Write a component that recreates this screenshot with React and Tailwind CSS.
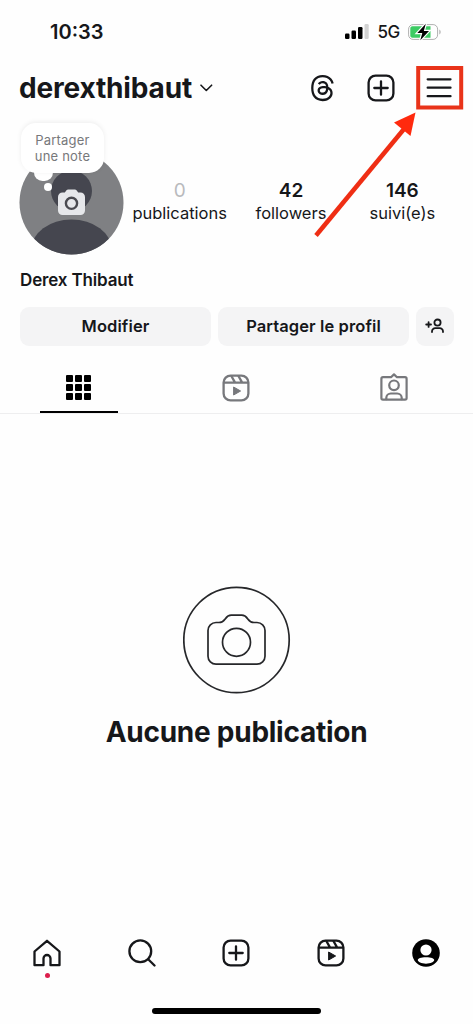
import React from "react";
import { FaThreads } from "react-icons/fa6";

const stats = [
    { value: "0", label: "publications", muted: true },
    { value: "42", label: "followers" },
    { value: "146", label: "suivi(e)s" },
];

function PlusIcon() {
    return (
        <svg width="28" height="28" viewBox="0 0 28 28" fill="none" stroke="currentColor" strokeWidth="2.3" strokeLinecap="round">
            <rect x="1.6" y="1.6" width="24.8" height="24.8" rx="7" />
            <path d="M14 7.3v13.4M7.3 14h13.4" />
        </svg>
    );
}

function ReelsIcon() {
    return (
        <svg width="28" height="28" viewBox="0 0 28 28" fill="none" stroke="currentColor" strokeWidth="2.3" strokeLinejoin="round">
            <rect x="1.6" y="1.6" width="24.8" height="24.8" rx="7" />
            <path d="M1.8 8.7h24.4M9.2 1.8l3.9 6.8M16.3 1.8l3.9 6.8" />
            <path d="M11.6 13v8l7-4z" fill="currentColor" strokeWidth="1" />
        </svg>
    );
}

function TaggedIcon() {
    return (
        <svg width="28" height="30" viewBox="0 0 28 30" fill="none" stroke="currentColor" strokeWidth="2.2" strokeLinejoin="round" strokeLinecap="round">
            <path d="M3 5.2h8L14 2.400l3 2.800h8a1.600 1.600 0 0 1 1.600 1.600V26a1.600 1.600 0 0 1-1.600 1.600H3A1.600 1.600 0 0 1 1.400 26V6.800A1.600 1.600 0 0 1 3 5.200z" />
            <circle cx="14" cy="13.300" r="4.800" />
            <path d="M6.300 27.200v-1.400a4.500 4.500 0 0 1 4.500-4.300h6.400a4.500 4.500 0 0 1 4.500 4.300v1.400" />
        </svg>
    );
}

function GridIcon() {
    return (
        <div className="grid grid-cols-3 gap-[2px] text-black">
            {Array.from({ length: 9 }).map((_, i) => (
                <span key={i} className="h-[7px] w-[7px] rounded-[1px] bg-black" />
            ))}
        </div>
    );
}

function StatusBar() {
    return (
        <div className="flex h-[62px] items-center justify-between pl-[50px] pr-[31px] pt-[1px]">
            <span className="text-[20px] font-semibold leading-6">10:33</span>
            <div className="flex items-center">
                <svg width="24" height="16" viewBox="0 0 24 16">
                    <rect x="0" y="9.500" width="4.500" height="5.500" rx="1.200" />
                    <rect x="6.500" y="6.500" width="4.500" height="8.500" rx="1.200" />
                    <rect x="13" y="3" width="4.500" height="12" rx="1.200" />
                    <rect x="19.500" y="0" width="4.200" height="15" rx="1.200" fill="#d2d2d2" />
                </svg>
                <span className="ml-[8px] text-[17px] font-medium leading-6 tracking-[-0.3px]">5G</span>
                <svg className="ml-[8px]" width="34" height="18" viewBox="0 0 34 18">
                    <rect x="0.600" y="1.600" width="29" height="14.800" rx="4.500" fill="#fff" stroke="#b0b0b0" />
                    <path d="M5 3.300h17.500v11.400H5A2.500 2.500 0 0 1 2.300 12V6A2.500 2.500 0 0 1 5 3.300z" fill="#3ccb63" />
                    <path d="M31.300 6.500c1.800.8 1.800 4.200 0 5z" fill="#b0b0b0" />
                    <path d="M17.800.8 9.300 10h5l-2 7.200L21 8h-5.200z" stroke="#fff" strokeWidth="2.400" paintOrder="stroke" />
                </svg>
            </div>
        </div>
    );
}

function Header() {
    return (
        <header className="flex h-[51px] items-center pl-[19px] pr-[20px]">
            <h1 className="text-[28px] font-bold leading-8 tracking-[-0.17px]">derexthibaut</h1>
            <svg className="ml-[8px] mt-[1px]" width="13" height="8" viewBox="0 0 13 8" fill="none" stroke="currentColor" strokeWidth="1.600" strokeLinecap="round" strokeLinejoin="round">
                <path d="M1 1.200 6.300 6.500l5.300-5.300" />
            </svg>
            <div className="ml-auto flex items-center">
                <FaThreads className="h-[28px] w-[25px]" />
                <span className="ml-[32px]">
                    <PlusIcon />
                </span>
                <svg className="ml-[31px]" width="27" height="20" viewBox="0 0 27 20" stroke="currentColor" strokeWidth="2.300" strokeLinecap="round">
                    <path d="M1.700 1.300h22.800M1.700 9.700h22.800M1.700 18.200h22.800" />
                </svg>
            </div>
        </header>
    );
}

function Avatar() {
    return (
        <div className="relative mt-[37px] h-[105px] w-[105px]">
            <svg width="105" height="105" viewBox="0 0 105 105">
                <clipPath id="avatar">
                    <circle cx="52.500" cy="52.500" r="52" />
                </clipPath>
                <g clipPath="url(#avatar)">
                    <rect width="105" height="105" fill="#7f8083" />
                    <circle cx="52.500" cy="41" r="20.500" fill="#45464f" />
                    <ellipse cx="52.500" cy="99" rx="40" ry="29.500" fill="#45464f" />
                </g>
                <path d="M43.500 42.500h2.300l1.700-2.300a2 2 0 0 1 1.600-.8h6.800a2 2 0 0 1 1.600.8l1.700 2.300h2.300a4.500 4.500 0 0 1 4.500 4.500v13.500a4.500 4.500 0 0 1-4.500 4.500h-18a4.500 4.500 0 0 1-4.500-4.500V47a4.500 4.500 0 0 1 4.500-4.500z" fill="#e6e7ea" />
                <circle cx="52.500" cy="53.300" r="5.600" fill="none" stroke="#4a4a50" strokeWidth="2.400" />
            </svg>
            <div className="absolute left-[15px] top-[14px] h-[17px] w-[19px] rounded-full bg-white" />
            <div className="absolute left-[25px] top-[33px] h-[8px] w-[8px] rounded-full bg-white" />
            <div className="absolute left-[2px] top-[-27px] flex h-[50px] w-[83px] items-center justify-center rounded-[15px] bg-white text-center text-[13px] leading-[16px] tracking-[0.2px] text-[#77787b] shadow-[0_-1px_5px_rgba(0,0,0,0.07)]">
                Partager
                <br />
                une note
            </div>
        </div>
    );
}

function Profile() {
    return (
        <section>
            <div className="flex h-[142px] pl-[19px] pr-[15px]">
                <Avatar />
                <div className="mt-[67px] grid flex-1 grid-cols-3 text-center">
                    {stats.map((stat) => (
                        <div key={stat.label}>
                            <p className={stat.muted ? "text-[19px] leading-[22px] text-[#b9babd]" : "text-[19px] font-semibold leading-[22px]"}>
                                {stat.value}
                            </p>
                            <p className="text-[16.5px] leading-[22px]">{stat.label}</p>
                        </div>
                    ))}
                </div>
            </div>
            <p className="mt-[13px] pl-[20px] text-[17px] font-semibold leading-6 tracking-[-0.15px]">Derex Thibaut</p>
            <div className="mt-[15px] flex h-[39px] gap-[7px] pl-[20px] pr-[19px] text-[16.5px] font-semibold tracking-[0.1px]">
                <button className="flex-1 rounded-[9px] bg-[#f4f4f5] pb-[1px]">Modifier</button>
                <button className="flex-1 rounded-[9px] bg-[#f4f4f5] pb-[1px]">Partager le profil</button>
                <button className="flex w-[38px] items-center justify-center rounded-[9px] bg-[#f4f4f5] pb-[1px]">
                    <svg width="20" height="16" viewBox="0 0 20 16" fill="none" stroke="currentColor" strokeWidth="1.800" strokeLinecap="round">
                        <path d="M1.200 6.500h4.800M3.600 4.100v4.800" />
                        <circle cx="12.500" cy="4.600" r="3.100" />
                        <path d="M7 14v-.5a3.300 3.300 0 0 1 3.300-3.300h4.400a3.300 3.300 0 0 1 3.300 3.300v.5" />
                    </svg>
                </button>
            </div>
        </section>
    );
}

function Tabs() {
    return (
        <div className="grid h-[68px] grid-cols-3 border-b border-[#eeeeef] text-[#77787c]">
            <div className="flex flex-col items-center">
                <div className="flex h-[65px] items-center pt-[18px]">
                    <GridIcon />
                </div>
                <div className="h-[2px] w-[78px] bg-black" />
            </div>
            <div className="flex h-[65px] items-center justify-center pt-[18px]">
                <ReelsIcon />
            </div>
            <div className="flex h-[65px] items-center justify-center pt-[17px]">
                <TaggedIcon />
            </div>
        </div>
    );
}

function EmptyState() {
    return (
        <div className="flex flex-1 flex-col items-center pt-[172px]">
            <svg width="108" height="108" viewBox="0 0 108 108" fill="none" stroke="#26272a" strokeWidth="1.700">
                <circle cx="53.500" cy="54" r="52.700" />
                <path d="M33 36.500h3c3 0 4.500-1.200 6.200-3.600 1.800-2.500 3.300-3.700 6-3.700h10.600c2.700 0 4.200 1.200 6 3.700 1.700 2.400 3.200 3.600 6.200 3.600h3a8 8 0 0 1 8 8v25.700a8 8 0 0 1-8 8h-41a8 8 0 0 1-8-8V44.500a8 8 0 0 1 8-8z" />
                <circle cx="53.500" cy="56.300" r="14" />
            </svg>
            <h2 className="mt-[22px] text-[28px] font-bold leading-8 tracking-[-0.26px]">Aucune publication</h2>
        </div>
    );
}

function BottomNav() {
    return (
        <nav className="grid h-[52px] grid-cols-5 items-center justify-items-center">
            <div className="relative">
                <svg width="28" height="28" viewBox="0 0 28 28" fill="none" stroke="currentColor" strokeWidth="2.300" strokeLinejoin="round">
                    <path d="M1.500 12.500 14 1.800l12.500 10.700v13.700h-9v-6.700a3.500 3.500 0 0 0-7 0v6.700h-9z" />
                </svg>
                <span className="absolute left-[12px] top-[34px] h-[5px] w-[5px] rounded-full bg-[#dc1f4d]" />
            </div>
            <svg width="28" height="28" viewBox="0 0 28 28" fill="none" stroke="currentColor" strokeWidth="2.300" strokeLinecap="round">
                <circle cx="12.300" cy="12.300" r="10.900" />
                <path d="m20.200 20.200 6.300 6.300" />
            </svg>
            <PlusIcon />
            <ReelsIcon />
            <svg width="28" height="28" viewBox="0 0 28 28">
                <circle cx="14" cy="14" r="13.800" />
                <circle cx="14" cy="11" r="5.600" fill="#fff" />
                <path d="M14 18.300c5.200 0 8.200 1.200 8.200 2.700 0 1.700-3.600 3.700-8.200 3.700s-8.200-2-8.200-3.700c0-1.500 3-2.700 8.200-2.700z" fill="#fff" />
            </svg>
        </nav>
    );
}

// Red frame and arrow pointing at the menu button
function MenuHint() {
    return (
        <svg className="pointer-events-none absolute right-[9px] top-[64px]" width="152" height="176" viewBox="0 0 152 176">
            <rect x="106.200" y="4" width="43" height="39.500" fill="none" stroke="#e93319" strokeWidth="4" />
            <path d="M4 171.500 92 65" stroke="#ef2e14" strokeWidth="4.500" />
            <path d="M103.500 48.500 98.500 72 82 58.500z" fill="#ff2a0e" />
        </svg>
    );
}

export default function App() {
    return (
        <div className="relative flex h-[1024px] w-[473px] flex-col overflow-hidden bg-[#fefefe] font-[Inter,sans-serif] text-[#16171a]">
            <StatusBar />
            <Header />
            <Profile />
            <Tabs />
            <EmptyState />
            <BottomNav />
            <div className="flex h-[45px] justify-center pt-[29px]">
                <div className="h-[6px] w-[169px] rounded-full bg-black" />
            </div>
            <MenuHint />
        </div>
    );
}
